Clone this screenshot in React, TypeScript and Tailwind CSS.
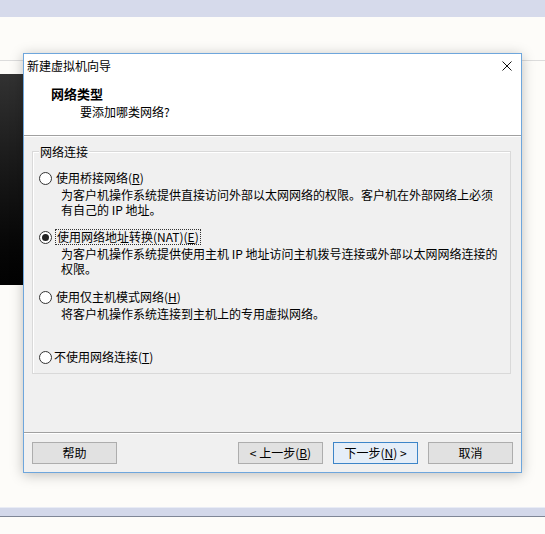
import React from "react";

function Radio({ checked }: { checked?: boolean }) {
  return (
    <span className="flex h-[13px] w-[13px] shrink-0 items-center justify-center rounded-full border border-[#333333] bg-white">
      {checked && <span className="h-[7px] w-[7px] rounded-full bg-[#222222]" />}
    </span>
  );
}

function Button({
  children,
  primary,
}: {
  children: React.ReactNode;
  primary?: boolean;
}) {
  return (
    <div
      className={
        primary
          ? "flex h-[22px] w-[85px] items-center justify-center border border-[#3d85c8] bg-[#e5eef8] text-[12px] leading-none text-black"
          : "flex h-[22px] w-[85px] items-center justify-center border border-[#adadad] bg-[#e1e1e1] text-[12px] leading-none text-black"
      }
    >
      {children}
    </div>
  );
}

function Etched() {
  return (
    <>
      <div className="h-px bg-[#a0a0a0]" />
      <div className="h-px bg-white" />
    </>
  );
}

export default function App() {
  return (
    <div className="relative flex h-[534px] w-[545px] flex-col overflow-hidden bg-[#fdfcf9] font-['Noto_Sans_CJK_SC',sans-serif] text-black">
      {/* desktop behind the dialog */}
      <div className="h-[17px] bg-[#d6daeb]" />
      <div className="h-[43px]" />
      <div className="h-px bg-[#dcdcdc]" />
      <div className="h-[13px]" />
      <div className="h-[211px] w-[40px] bg-gradient-to-b from-[#323232] to-[#020202]" />
      <div className="flex-1" />
      <div className="h-px bg-[#e9ecf5]" />
      <div className="h-[8px] bg-[#d3d8ea]" />
      <div className="h-px bg-[#7f8696]" />
      <div className="h-[17px]" />

      {/* wizard window */}
      <div className="absolute left-[23px] top-[53px] flex h-[420px] w-[499px] flex-col border border-[#6ea6dc] bg-[#f0f0f0] shadow-[0_2px_12px_rgba(0,0,0,0.25)]">
        <div className="h-[81px] bg-white">
          <div className="flex h-[24px] items-center justify-between pl-[3px] pr-[9px]">
            <span className="text-[12px] leading-[16px]">新建虚拟机向导</span>
            <svg width="10" height="10" viewBox="0 0 10 10">
              <path d="M0.5 0.5 L9.5 9.5 M9.5 0.5 L0.5 9.5" stroke="#111" strokeWidth="1" />
            </svg>
          </div>
          <div className="mt-[8px] pl-[27px] text-[13px] font-bold leading-[16px]">网络类型</div>
          <div className="mt-[2px] pl-[56px] text-[12px] leading-[16px]">要添加哪类网络?</div>
        </div>
        <Etched />

        <div className="h-[295px]">
          <div className="relative ml-[8px] mt-[14px] w-[479px] border border-[#d9d9d9] pb-[8px] pt-[18px] text-[12px] shadow-[inset_1px_1px_0_#ffffff]">
            <span className="absolute left-[6px] top-[-8px] bg-[#f0f0f0] px-px leading-[15px]">网络连接</span>

            <div className="flex h-[16px] items-center gap-[4px] pl-[6px]">
              <Radio />
              <span className="leading-[16px]">
                使用桥接网络(<u>R</u>)
              </span>
            </div>
            <p className="mt-[1px] whitespace-nowrap pl-[28px] leading-[15px]">
              为客户机操作系统提供直接访问外部以太网网络的权限。客户机在外部网络上必须
              <br />
              有自己的 IP 地址。
            </p>

            <div className="mt-[12px] flex h-[16px] items-center gap-[3px] pl-[6px]">
              <Radio checked />
              <span className="border border-dotted border-[#333333] px-px leading-[14px]">
                使用网络地址转换(NAT)(<u>E</u>)
              </span>
            </div>
            <p className="mt-[1px] whitespace-nowrap pl-[28px] leading-[15px]">
              为客户机操作系统提供使用主机 IP 地址访问主机拨号连接或外部以太网网络连接的
              <br />
              权限。
            </p>

            <div className="mt-[13px] flex h-[16px] items-center gap-[4px] pl-[6px]">
              <Radio />
              <span className="leading-[16px]">
                使用仅主机模式网络(<u>H</u>)
              </span>
            </div>
            <p className="mt-[1px] whitespace-nowrap pl-[28px] leading-[15px]">
              将客户机操作系统连接到主机上的专用虚拟网络。
            </p>

            <div className="mt-[28px] flex h-[16px] items-center gap-[2px] pl-[6px]">
              <Radio />
              <span className="leading-[16px]">
                不使用网络连接(<u>T</u>)
              </span>
            </div>
          </div>
        </div>
        <Etched />

        <div className="flex flex-1 items-start justify-between px-[8px] pt-[8px]">
          <Button>帮助</Button>
          <div className="flex gap-[10px]">
            <Button>
              &lt; 上一步(<u>B</u>)
            </Button>
            <Button primary>
              下一步(<u>N</u>) &gt;
            </Button>
            <Button>取消</Button>
          </div>
        </div>
      </div>
    </div>
  );
}
